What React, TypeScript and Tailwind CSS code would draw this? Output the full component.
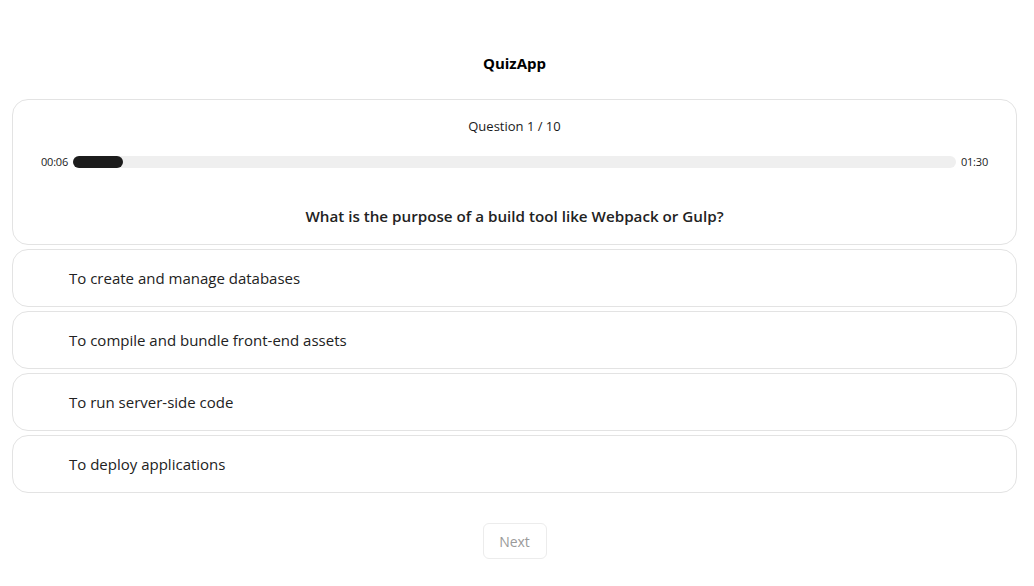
import React from 'react';

const options = [
  'To create and manage databases',
  'To compile and bundle front-end assets',
  'To run server-side code',
  'To deploy applications',
];

export default function App() {
  return (
    <div
      className="min-h-screen bg-white text-[#1a1a1a]"
      style={{ fontFamily: '"Open Sans", "Noto Sans", sans-serif' }}
    >
      <div className="ml-[12px] w-[1005px] pt-[52px]">
        {/* Header */}
        <h1 className="text-center text-[15px] font-bold leading-[22px] text-black">QuizApp</h1>

        {/* Question card */}
        <div className="mt-[25px] h-[146px] rounded-2xl border border-[#e3e3e3] px-[28px] pt-[17px]">
          <div className="text-center text-[13px] font-medium leading-[18px]">Question 1 / 10</div>
          <div className="mt-[21px] flex items-center gap-[5px] text-[11px] leading-[12px] tracking-[-0.2px]">
            <span>00:06</span>
            <div className="h-[12px] flex-1 rounded-full bg-[#efefef]">
              <div className="h-full w-[50px] rounded-full bg-[#1c1c1c]" />
            </div>
            <span>01:30</span>
          </div>
          <div className="mt-[37px] text-center text-[15.2px] font-semibold leading-[22px] text-[#222]">
            What is the purpose of a build tool like Webpack or Gulp?
          </div>
        </div>

        {/* Options */}
        <div className="mt-[4px] flex flex-col gap-[4px]">
          {options.map((opt) => (
            <button
              key={opt}
              className="flex h-[58px] items-center rounded-2xl border border-[#e3e3e3] bg-white pl-[56px] text-left text-[15px] leading-[22px] text-[#222]"
            >
              {opt}
            </button>
          ))}
        </div>

        {/* Next */}
        <div className="mt-[30px] flex justify-center">
          <button
            disabled
            className="h-[36px] w-[64px] rounded-md border border-[#ececec] bg-white text-[14px] text-[#9a9a9a]"
          >
            Next
          </button>
        </div>
      </div>
    </div>
  );
}
